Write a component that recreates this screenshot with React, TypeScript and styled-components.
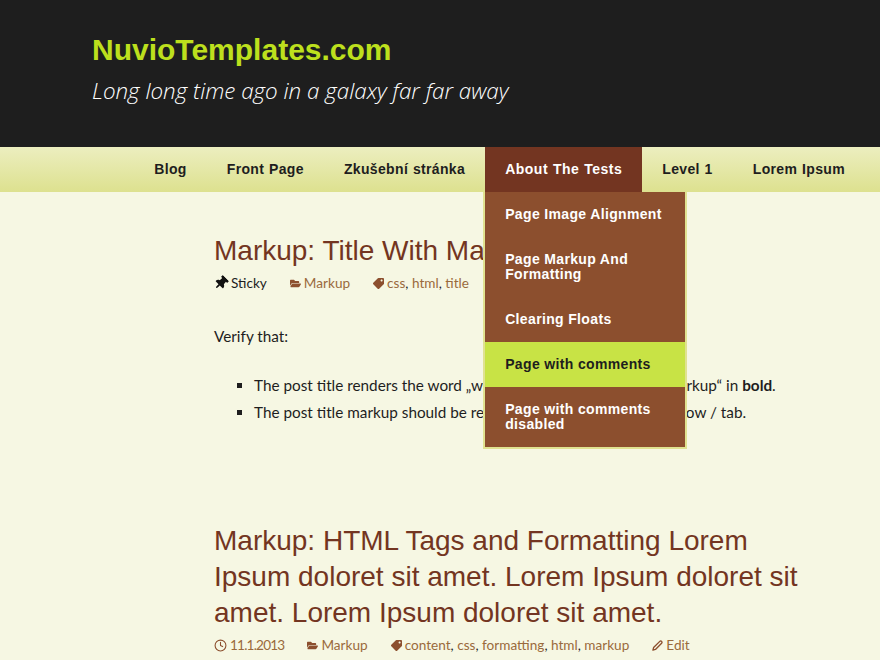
import React from "react";
import styled, { createGlobalStyle } from "styled-components";
import { FaFolderOpen, FaTag, FaThumbtack } from "react-icons/fa";
import { FiClock, FiEdit2 } from "react-icons/fi";

const GlobalStyle = createGlobalStyle`
  html, body {
    margin: 0;
    padding: 0;
    background: #f6f7e3;
    height: 660px;
    overflow: hidden;
  }
  body {
    font-family: "Lato", "Open Sans", sans-serif;
    font-size: 15.3px;
    color: #1e1e1e;
  }
`;

const Header = styled.header`
  height: 147px;
  box-sizing: border-box;
  background: #1e1e1e;
  padding: 32px 0 0 92px;
`;

const SiteTitle = styled.h1`
  margin: 0;
  font: bold 30px/36px "Liberation Sans", Arial, sans-serif;
  color: #bde01d;
`;

const Tagline = styled.p`
  margin: 4px 0 0;
  font: italic 300 22.4px/38px "Open Sans", sans-serif;
  color: #fff;
`;

const Nav = styled.nav`
  height: 45px;
  display: flex;
  justify-content: flex-end;
  padding-right: 15px;
  background: linear-gradient(#eceebf, #dde18f);
`;

const NavEntry = styled.div`
  position: relative;
`;

const NavLink = styled.a<{ $current?: boolean }>`
  display: block;
  padding: 0 20px;
  font: bold 14px/45px "Liberation Sans", Arial, sans-serif;
  letter-spacing: ${(p) => (p.$current ? "0.5px" : "0.35px")};
  word-spacing: 0.5px;
  color: ${(p) => (p.$current ? "#fff" : "#1e1e1e")};
  background: ${(p) => (p.$current ? "#733521" : "transparent")};
`;

const Dropdown = styled.div`
  position: absolute;
  top: 45px;
  left: -2px;
  width: 200px;
  border: 2px solid #e0e290;
  border-top: 0;
  z-index: 2;
`;

const DropLink = styled.a<{ $active?: boolean }>`
  display: block;
  padding: 15px 20px;
  font: bold 14px/15px "Liberation Sans", Arial, sans-serif;
  letter-spacing: 0.35px;
  color: ${(p) => (p.$active ? "#1e1e1e" : "#fff")};
  background: ${(p) => (p.$active ? "#c8e345" : "#8c4f2e")};
`;

const Main = styled.main`
  padding: 41px 60px 0 214px;
`;

const Post = styled.article`
  & + & {
    margin-top: 97px;
  }
`;

const PostTitle = styled.h2`
  margin: 0;
  font: normal 28px/36px "Liberation Sans", Arial, sans-serif;
  color: #733521;
`;

const Meta = styled.div`
  display: flex;
  gap: 23px;
  margin-top: 4px;
  font-size: 13.6px;
  line-height: 20px;
  color: #1e1e1e;
`;

const MetaItem = styled.span`
  display: inline-flex;
  align-items: center;
  gap: 3px;
  white-space: nowrap;
  svg {
    font-size: 11px;
    color: #8c4f2e;
  }
`;

const PinItem = styled(MetaItem)`
  svg {
    font-size: 14px;
    color: #111;
    transform: rotate(45deg);
  }
`;

const TagItem = styled(MetaItem)`
  svg {
    transform: rotate(90deg);
  }
`;

const ClockItem = styled(MetaItem)`
  svg {
    font-size: 13px;
  }
`;

const EditItem = styled(MetaItem)`
  svg {
    stroke-width: 3;
  }
`;

const MetaLink = styled.a`
  color: #9a6a3c;
`;

const DateText = styled(MetaLink)`
  letter-spacing: -0.8px;
`;

const Paragraph = styled.p`
  margin: 30px 0 0;
  line-height: 27px;
`;

const BulletList = styled.ul`
  margin: 22px 0 0;
  padding-left: 40px;
  list-style: square;
  line-height: 27px;
`;

const navItems = ["Blog", "Front Page", "Zkušební stránka", "About The Tests", "Level 1", "Lorem Ipsum"];

const dropItems = [
  "Page Image Alignment",
  "Page Markup And Formatting",
  "Clearing Floats",
  "Page with comments",
  "Page with comments disabled",
];

const links = (names: string[]) =>
  names.map((name, i) => (
    <React.Fragment key={name}>
      {i > 0 && ", "}
      <MetaLink>{name}</MetaLink>
    </React.Fragment>
  ));

export default function App() {
  return (
    <>
      <GlobalStyle />
      <Header>
        <SiteTitle>NuvioTemplates.com</SiteTitle>
        <Tagline>Long long time ago in a galaxy far far away</Tagline>
      </Header>
      <Nav>
        {navItems.map((item) => (
          <NavEntry key={item}>
            <NavLink $current={item === "About The Tests"}>{item}</NavLink>
            {item === "About The Tests" && (
              <Dropdown>
                {dropItems.map((d) => (
                  <DropLink key={d} $active={d === "Page with comments"}>
                    {d}
                  </DropLink>
                ))}
              </Dropdown>
            )}
          </NavEntry>
        ))}
      </Nav>
      <Main>
        <Post>
          <PostTitle>Markup: Title With Markup</PostTitle>
          <Meta>
            <PinItem>
              <FaThumbtack />
              Sticky
            </PinItem>
            <MetaItem>
              <FaFolderOpen />
              <MetaLink>Markup</MetaLink>
            </MetaItem>
            <TagItem>
              <FaTag />
              <span>{links(["css", "html", "title"])}</span>
            </TagItem>
          </Meta>
          <Paragraph>Verify that:</Paragraph>
          <BulletList>
            <li>
              The post title renders the word „with“ in italics and the word „markup“ in <b>bold</b>.
            </li>
            <li>The post title markup should be removed from the browser window / tab.</li>
          </BulletList>
        </Post>
        <Post>
          <PostTitle>
            Markup: HTML Tags and Formatting Lorem Ipsum doloret sit amet. Lorem Ipsum doloret sit amet. Lorem Ipsum
            doloret sit amet.
          </PostTitle>
          <Meta>
            <ClockItem>
              <FiClock />
              <DateText>11.1.2013</DateText>
            </ClockItem>
            <MetaItem>
              <FaFolderOpen />
              <MetaLink>Markup</MetaLink>
            </MetaItem>
            <TagItem>
              <FaTag />
              <span>{links(["content", "css", "formatting", "html", "markup"])}</span>
            </TagItem>
            <EditItem>
              <FiEdit2 />
              <MetaLink>Edit</MetaLink>
            </EditItem>
          </Meta>
        </Post>
      </Main>
    </>
  );
}
